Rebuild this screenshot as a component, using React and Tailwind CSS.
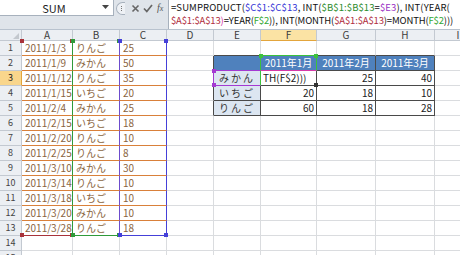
import React from 'react';

const COLS = ['A', 'B', 'C', 'D', 'E', 'F', 'G', 'H', 'I'];
const WIDTHS = ['w-[51px]', 'w-[47px]', 'w-[47px]', 'w-[47px]', 'w-[47px]', 'w-[56px]', 'w-[59px]', 'w-[59px]', 'w-[47px]'];

const data = [
  ['2011/1/3', 'りんご', '25'],
  ['2011/1/9', 'みかん', '50'],
  ['2011/1/12', 'りんご', '35'],
  ['2011/1/15', 'いちご', '20'],
  ['2011/2/4', 'みかん', '25'],
  ['2011/2/15', 'いちご', '18'],
  ['2011/2/20', 'りんご', '10'],
  ['2011/2/25', 'りんご', '8'],
  ['2011/3/10', 'みかん', '30'],
  ['2011/3/14', 'りんご', '10'],
  ['2011/3/18', 'いちご', '10'],
  ['2011/3/20', 'みかん', '10'],
  ['2011/3/28', 'りんご', '18'],
];

// summary table E2:H5
const table = {
  2: ['', '2011年1月', '2011年2月', '2011年3月'],
  3: ['みかん', 'TH(F$2)))', '25', '40'],
  4: ['いちご', '20', '18', '10'],
  5: ['りんご', '60', '18', '28'],
};

// little squares at the corners of the highlighted ranges
const CORNER_POS = {
  tl: '-left-[2px] -top-[2px]',
  tr: '-right-[2px] -top-[2px]',
  bl: '-left-[2px] -bottom-[2px]',
  br: '-right-[2px] -bottom-[2px]',
};

const RED = 'bg-[#a8323a]';
const GREEN = 'bg-[#2f9a3a]';
const BLUE = 'bg-[#4540d8]';
const LIME = 'bg-[#3cc13c]';
const PURPLE = 'bg-[#a43ad2]';

const corners = {
  '1-0': [['tl', RED], ['tr', RED]],
  '13-0': [['bl', RED], ['br', RED]],
  '1-1': [['tl', GREEN], ['tr', GREEN]],
  '13-1': [['bl', GREEN], ['br', GREEN]],
  '1-2': [['tl', BLUE], ['tr', BLUE]],
  '13-2': [['bl', BLUE], ['br', BLUE]],
  '2-5': [['tl', LIME], ['tr', LIME]],
  '3-4': [['tl', PURPLE], ['bl', PURPLE]],
  '3-5': [['br', 'bg-[#333]']],
};

function cellInfo(row, col) {
  let text = '';
  let align = 'justify-start pl-[3px]';
  let fill = '';
  let color = 'text-[#222]';
  let br = 'border-r-[#dadcdf]';
  let bb = 'border-b-[#dadcdf]';

  if (col < 3 && row <= 13) {
    text = data[row - 1][col];
    color = 'text-[#8a6440]';
    if (row < 13) bb = 'border-b-[#d9803a]';
    br = ['border-r-[#2f9a3a]', 'border-r-[#6d4ccc]', 'border-r-[#4540d8]'][col];
    if (row === 13) bb = ['border-b-[#a8323a]', 'border-b-[#2f9a3a]', 'border-b-[#4540d8]'][col];
  }

  if (col >= 4 && col <= 7 && row >= 2 && row <= 5) {
    text = table[row][col - 4];
    br = 'border-r-[#4a4a4a]';
    bb = 'border-b-[#4a4a4a]';
    if (row === 2) {
      fill = 'bg-[#4f81bd]';
      color = 'text-white';
      align = 'justify-center';
    } else if (col === 4) {
      fill = 'bg-[#dce6f1]';
      color = 'text-[#333]';
      align = 'justify-center tracking-[2px]';
    } else if (row === 3 && col === 5) {
      align = 'justify-start pl-[2px]';
    } else {
      align = 'justify-end pr-[2px]';
    }
  }
  // outer edges of the table
  if (col === 3 && row >= 2 && row <= 5) br = 'border-r-[#4a4a4a]';
  if (row === 1 && col >= 4 && col <= 7) bb = 'border-b-[#4a4a4a]';

  // reference highlights inside the table
  if (row === 1 && col === 5) bb = 'border-b-[#3cc13c]';
  if (row === 2 && col === 4) { br = 'border-r-[#3cc13c]'; bb = 'border-b-[#a43ad2]'; }
  if (row === 2 && col === 5) { br = 'border-r-[#3cc13c]'; bb = 'border-b-[#d63aa8]'; }
  if (row === 3 && col === 3) br = 'border-r-[#a43ad2]';
  if (row === 3 && col === 4) { br = 'border-r-[#3cc13c]'; bb = 'border-b-[#a43ad2]'; }

  return { text, align, fill, color, br, bb };
}

function FormulaBar() {
  return (
    <div className="flex h-[30px] bg-[#dfe4ea] border-b border-[#b8c2ce]">
      <div className="w-[168px] flex flex-col">
        <div className="flex h-[16px]">
          <div className="w-[114px] h-[16px] bg-white border-r border-b border-[#a7b1bd] flex items-center">
            <span className="flex-1 text-center text-[11px] leading-[14px] text-[#222] pl-[6px]">SUM</span>
            <svg width="7" height="5" viewBox="0 0 7 5" className="mr-[4px]">
              <path d="M0 0h7L3.5 4z" fill="#444" />
            </svg>
          </div>
          <div className="flex-1 flex items-center h-[16px]">
            <div className="ml-[2px] w-[9px] h-[13px] rounded-l-full border border-r-0 border-[#a7b1bd] bg-[#eef1f5] flex flex-col items-center justify-center gap-[1px]">
              <div className="w-[1px] h-[1px] bg-[#777]" />
              <div className="w-[1px] h-[1px] bg-[#777]" />
              <div className="w-[1px] h-[1px] bg-[#777]" />
            </div>
            <svg width="9" height="9" viewBox="0 0 9 9" className="ml-[6px]">
              <path d="M1.5 1.5l6 6M7.5 1.5l-6 6" stroke="#666" strokeWidth="1.6" />
            </svg>
            <svg width="10" height="9" viewBox="0 0 10 9" className="ml-[3px]">
              <path d="M1 4.5l2.8 3L9 1" stroke="#666" strokeWidth="1.7" fill="none" />
            </svg>
            <span className="ml-[4px] text-[10px] leading-[10px] italic font-['Liberation_Serif',serif] text-[#555]">f<span className="text-[8px]">x</span></span>
          </div>
        </div>
      </div>
      <div className="flex-1 bg-white border-l border-[#a7b1bd] pl-[2px] pt-[1px] text-[9.5px] leading-[13px] text-[#111] whitespace-nowrap overflow-hidden">
        <div className="tracking-[0.1px]">
          =SUMPRODUCT(<span className="text-[#3434d6]">$C$1:$C$13</span>, INT(<span className="text-[#2b8c2b]">$B$1:$B$13</span>=<span className="text-[#9a30c4]">$E3</span>), INT(YEAR(
        </div>
        <div className="tracking-[-0.15px]">
          <span className="text-[#b02e40]">$A$1:$A$13</span><span className="text-[#d22aa6]">)</span>=YEAR(<span className="text-[#33a833]">F$2</span>)), INT(MONTH(<span className="text-[#b02e40]">$A$1:$A$13</span>)=MONTH(<span className="text-[#33a833]">F$2</span>)))
        </div>
      </div>
    </div>
  );
}

function HeaderRow() {
  return (
    <div className="flex h-[11px] text-[10px] leading-[10px] text-[#3c3c3c]">
      <div className="w-[22px] shrink-0 flex items-end justify-end pr-[2px] pb-[1px] bg-[#e9edf2] border-r border-b border-[#c3c9d1]">
        <svg width="6" height="6" viewBox="0 0 6 6">
          <path d="M6 0v6H0z" fill="#c3c8ce" />
        </svg>
      </div>
      {COLS.map((c, i) => (
        <div
          key={c}
          className={`${WIDTHS[i]} shrink-0 flex items-center justify-center border-r border-b ${
            c === 'F'
              ? 'bg-[#fbe3a4] border-r-[#c3c9d1] border-b-[#e3a53c]'
              : 'bg-[#eceff3] border-[#c3c9d1]'
          }`}
        >
          {c}
        </div>
      ))}
    </div>
  );
}

function Row({ row }) {
  const active = row === 3;
  return (
    <div className="flex h-[15px] text-[10px] leading-[14px]">
      <div
        className={`w-[22px] shrink-0 flex items-center justify-center border-r border-b text-[9px] ${
          active ? 'bg-[#f9d68c] border-r-[#e3a53c] border-b-[#c3c9d1] text-[#222]' : 'bg-[#eceff3] border-[#c3c9d1] text-[#444]'
        }`}
      >
        {row}
      </div>
      {COLS.map((c, i) => {
        const { text, align, fill, color, br, bb } = cellInfo(row, i);
        const marks = corners[`${row}-${i}`] || [];
        return (
          <div
            key={c}
            className={`relative ${WIDTHS[i]} shrink-0 flex items-center border-r border-b whitespace-nowrap ${br} ${bb} ${fill} ${color} ${align}`}
          >
            <span className="overflow-hidden">{text}</span>
            {marks.map(([pos, bg]) => (
              <span key={pos} className={`absolute z-10 w-[4px] h-[4px] ${CORNER_POS[pos]} ${bg}`} />
            ))}
          </div>
        );
      })}
    </div>
  );
}

export default function App() {
  const rows = Array.from({ length: 15 }, (_, i) => i + 1);
  return (
    <div className="w-[460px] h-[255px] overflow-hidden bg-white font-['Noto_Sans_CJK_JP',sans-serif]">
      <FormulaBar />
      <HeaderRow />
      <div>
        {rows.map((r) => (
          <Row key={r} row={r} />
        ))}
      </div>
    </div>
  );
}
